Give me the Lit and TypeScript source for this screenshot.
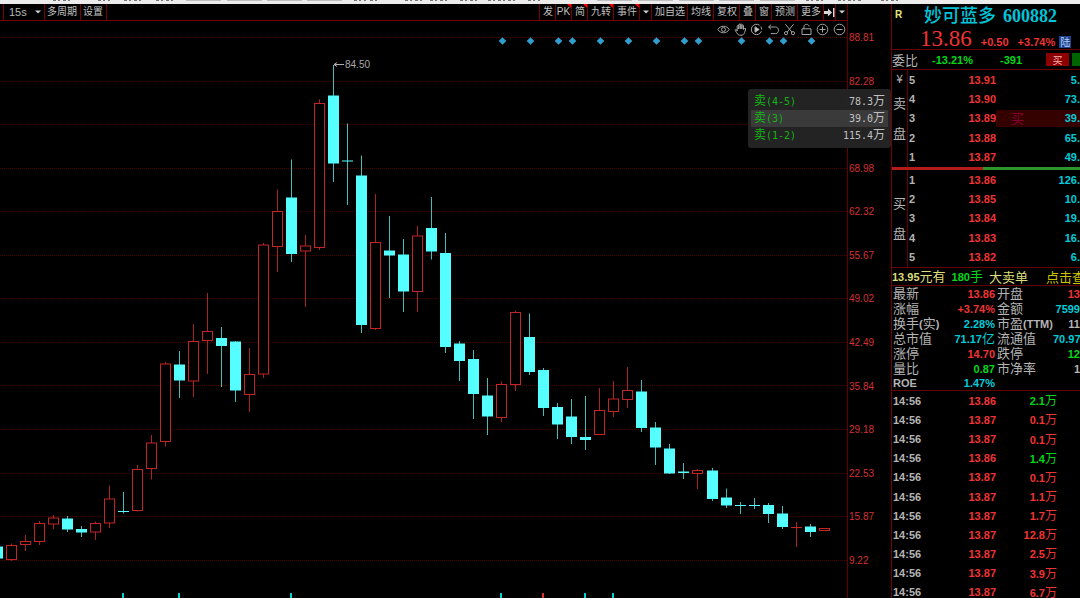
import { LitElement, html, svg, css } from "lit";
import { customElement } from "lit/decorators.js";
import { classMap } from "lit/directives/class-map.js";

// [direction, high, body top, body bottom, low] in canvas pixels
type Candle = ["u" | "d", number, number, number, number];

const CANDLES: Candle[] = [
  ["d", 509.5, 509.5, 521.5, 521.5],
  ["u", 506.5, 508.5, 522.5, 524], ["u", 498, 504.5, 507.5, 514], ["u", 484, 486.5, 504.5, 508],
  ["u", 478, 481, 487, 492], ["d", 479, 481.5, 492.5, 495], ["d", 489, 492, 495.5, 500],
  ["u", 484.5, 486.5, 495, 503], ["u", 448.5, 462, 486, 491], ["d", 455, 474, 475, 476.5],
  ["u", 428, 432.5, 473.5, 474.5], ["u", 398, 406, 431.5, 442.5], ["u", 325, 327, 404.5, 409.5],
  ["d", 314, 327.5, 343.5, 361], ["u", 287, 304.5, 344, 360], ["u", 256, 294.5, 303.5, 337],
  ["d", 290, 301, 309, 350], ["d", 304, 304.5, 353.5, 365], ["u", 311, 337.5, 357.5, 375],
  ["u", 206, 208, 337, 341], ["u", 152.5, 174.5, 209.5, 235], ["d", 122.5, 160.5, 217, 225],
  ["u", 198, 209, 214, 270], ["u", 62.5, 66.5, 210.5, 213], ["d", 28, 58.5, 126.5, 145],
  ["d", 86.5, 123.5, 124.5, 168], ["d", 118.5, 138.5, 288, 296], ["u", 157, 205.5, 291.5, 293],
  ["d", 179, 213.5, 218.5, 261], ["d", 202, 217.5, 254.5, 275], ["u", 189, 199, 254.5, 275],
  ["d", 160, 191, 214.5, 222.5], ["d", 196, 216, 310, 316], ["d", 304, 306.5, 324, 344],
  ["d", 313, 322, 357, 382], ["d", 341, 358.5, 379.5, 398], ["u", 344.5, 347.5, 380.5, 385],
  ["u", 273.5, 275.5, 347.5, 354], ["d", 276.5, 300, 335, 338], ["d", 331, 333, 371, 379],
  ["d", 366, 370, 387.5, 402], ["d", 362, 379.5, 400, 407], ["d", 359, 400, 403, 413],
  ["u", 351, 373.5, 397.5, 398], ["u", 344, 362, 374.5, 380], ["u", 330, 353.5, 362.5, 371],
  ["d", 343, 354.5, 391, 395], ["d", 385, 390.5, 410.5, 428], ["d", 407, 411.5, 436.5, 437],
  ["d", 426, 434.5, 436, 442], ["u", 432, 433.5, 436.5, 452], ["d", 431, 433.5, 462, 464],
  ["d", 451.5, 460.5, 468.5, 471], ["d", 465, 468, 469, 477], ["d", 461, 468, 469, 472],
  ["d", 466, 468, 477, 486], ["d", 469, 476.5, 490, 492], ["u", 485, 490.5, 490.5, 510],
  ["d", 487, 489.5, 495, 500], ["u", 491, 491.5, 493.5, 494],
];

const EVENTS = [36, 38, 40, 41, 43, 45, 47, 49, 50, 53, 55, 56, 58];
const VOLUMES: [number, "u" | "d"][] = [[9, "d"], [13, "d"], [21, "d"], [36, "d"], [39, "u"], [42, "d"], [44, "d"]];
const SCALE = ["88.81", "82.28", "75.63", "68.98", "62.32", "55.67", "49.02", "42.49", "35.84", "29.18", "22.53", "15.87", "9.22"];

const SELLS = [["5", "13.91", "5."], ["4", "13.90", "73."], ["3", "13.89", "39."], ["2", "13.88", "65."], ["1", "13.87", "49."]];
const BUYS = [["1", "13.86", "126."], ["2", "13.85", "10."], ["3", "13.84", "19."], ["4", "13.83", "16."], ["5", "13.82", "6."]];

// label, value, tone, second label, second value, tone
const QUOTE = [
  ["最新", "13.86", "red", "开盘", "13", "red"],
  ["涨幅", "+3.74%", "red", "金额", "7599", "cyan"],
  ["换手(实)", "2.28%", "cyan", "市盈(TTM)", "11", "grey"],
  ["总市值", "71.17亿", "cyan", "流通值", "70.97", "cyan"],
  ["涨停", "14.70", "red", "跌停", "12", "green"],
  ["量比", "0.87", "green", "市净率", "1", "grey"],
  ["ROE", "1.47%", "cyan", "", "", "grey"],
];

const TICKS = [
  ["13.86", "2.1", "green"], ["13.87", "0.1", "red"], ["13.87", "0.1", "red"], ["13.86", "1.4", "green"],
  ["13.87", "0.1", "red"], ["13.87", "1.1", "red"], ["13.87", "1.7", "red"], ["13.87", "12.8", "red"],
  ["13.87", "2.5", "red"], ["13.87", "3.9", "red"], ["13.87", "6.7", "red"],
];

const centre = (i: number) => Math.round(11 + 14.01 * (i - 1));

@customElement("kline-chart")
class KlineChart extends LitElement {
  static styles = css`
    :host { display: block; flex: 1; min-height: 0; }
    .canvas { display: block; width: 100%; height: 100%; overflow: hidden; }
    .grid { stroke: #4c0000; stroke-dasharray: 1 1; }
    .wick-u { stroke: #a82424; }
    .wick-d { stroke: #44bcbc; }
    .body-u { fill: #000; stroke: #c42424; }
    .body-d { fill: #55ffff; }
    .event { fill: #2f9fcf; }
    .vol-u { fill: #e03030; }
    .vol-d { fill: #00d4d4; }
    .note { fill: #a8a8a8; font: 10px "Liberation Sans", sans-serif; }
    .arrow { stroke: #b0b0b0; fill: none; }
  `;

  candle([dir, high, top, bottom, low]: Candle, i: number) {
    const x = centre(i);
    return svg`
      <line class="wick-${dir}" x1=${x + 0.5} x2=${x + 0.5} y1=${high} y2=${low}></line>
      ${dir === "u"
        ? svg`<rect class="body-u" x=${x - 4.5} y=${top} width="10" height=${Math.max(bottom - top, 0.1)}></rect>`
        : svg`<rect class="body-d" x=${x - 5} y=${top} width="11" height=${bottom - top}></rect>`}`;
  }

  render() {
    return html`<svg class="canvas" role="img" aria-label="K线图">
      ${SCALE.map((_, i) => {
        const y = Math.round(i * 43.55) + 0.5;
        return svg`<line class="grid" x1="0" x2="100%" y1=${y} y2=${y}></line>`;
      })}
      ${CANDLES.map((c, i) => this.candle(c, i))}
      ${EVENTS.map((i) => {
        const x = centre(i) + 1.5;
        return svg`<path class="event" d="M${x - 3.8} 4L${x} 0.2L${x + 3.8} 4L${x} 7.8Z"></path>`;
      })}
      ${VOLUMES.map(([i, dir]) => svg`<rect class="vol-${dir}" x=${centre(i) - 1} y="556" width="2" height="5"></rect>`)}
      <path class="arrow" d="M344 27.5H334M337 25.5L334 27.5L337 29.5"></path>
      <text class="note" x="345" y="31">84.50</text>
    </svg>`;
  }
}

@customElement("quote-panel")
class QuotePanel extends LitElement {
  static styles = css`
    :host {
      display: block; box-sizing: border-box; width: 189px; flex: none; overflow: hidden;
      border-left: 1px solid #780000; color: #b4b4b4;
      font: bold 11px/14px "Liberation Sans", "Noto Sans CJK SC", sans-serif; white-space: nowrap;
    }
    .cn { font-size: 13px; font-weight: 400; font-family: "Noto Sans CJK SC", sans-serif; }
    .cn.small { font-size: 12px; }
    .red { color: #f03434; }
    .green { color: #00d818; }
    .cyan { color: #00ccd8; }
    .grey { color: #b4b4b4; }
    .title { display: flex; align-items: center; height: 22px; padding-left: 3px; }
    .mark { width: 29px; color: #e6e67a; font-size: 10px; }
    .name { margin: 0; display: flex; gap: 7px; align-items: baseline; color: #00c4d8; font: 500 18px/22px "Noto Sans CJK SC", sans-serif; }
    .code { font: bold 18px/22px "Liberation Serif", serif; }
    .price { display: flex; align-items: baseline; height: 23px; gap: 9px; padding-left: 28px; border-bottom: 1px solid #600; }
    .last { font: 23px/26px "Liberation Serif", serif; }
    .tag { background: #1d438e; color: #b8d0f4; font: 10px/12px "Noto Sans CJK SC", sans-serif; padding: 0 1px; margin-left: -5px; }
    .ratio { display: flex; align-items: center; height: 19px; border-bottom: 1px solid #600; }
    .ratio .pct { margin-left: 14px; }
    .ratio .diff { margin-left: 27px; }
    .trade { box-sizing: border-box; width: 23px; height: 13px; flex: none; border: 0; padding: 0; font: 10px/13px "Noto Sans CJK SC", sans-serif; }
    .trade.buy { margin-left: 24px; background: #8c0000; color: #f4b0b0; }
    .trade.sell { margin-left: 3px; background: #006400; }
    .book { display: flex; height: 97px; }
    .side { display: flex; flex-direction: column; align-items: center; width: 16px; border-right: 1px solid #600; gap: 16px; padding-top: 26px; box-sizing: border-box; height: 97px; flex: none; }
    .side.sells { padding-top: 1px; }
    .side.sells .yen { margin-bottom: -5px; font-size: 12px; }
    table { border-collapse: collapse; table-layout: fixed; width: 100%; }
    td, th { padding: 0; height: 1px; font-weight: bold; text-align: right; vertical-align: middle; overflow: hidden; }
    th { text-align: left; }
    .levels { height: 97px; }
    .levels th { padding-left: 1px; }
    .c-level { width: 40px; }
    .c-price { width: 48px; }
    .vol { display: flex; justify-content: flex-end; align-items: center; height: 17px; }
    .vol.hot { background: #340000; justify-content: space-between; padding-left: 15px; }
    .hint { color: #86002c; }
    .balance { display: flex; height: 3px; }
    .balance .sold { width: 91px; background: #b41c1c; }
    .balance .bought { flex: 1; background: #2c962c; }
    .alert { display: flex; height: 17px; align-items: center; border: solid #600; border-width: 1px 0; color: #dcdc78; }
    .alert .qty { margin: 0 6px; }
    .alert a { margin-left: 18px; color: #d0c400; text-decoration: none; }
    .quote { height: 104px; line-height: 14px; }
    .quote th { padding-left: 1px; overflow: visible; }
    .quote .c1 { width: 50px; }
    .quote .c2 { width: 53px; }
    .quote .c3 { width: 58px; }
    .quote .second { padding-left: 2px; }
    .ticks { height: 212px; border-top: 1px solid #600; }
    .ticks th { padding-left: 1px; }
    .ticks .c1 { width: 56px; }
    .ticks .c2 { width: 48px; }
    .ticks .c3 { width: 61px; }
  `;

  // numerals stay bold, characters use the regular CJK face
  mixed(text: string, small = false) {
    return text.split(/([\u4e00-\u9fff]+)/).map((part) =>
      /[\u4e00-\u9fff]/.test(part) ? html`<span class=${classMap({ cn: true, small })}>${part}</span>` : part);
  }

  levels(rows: string[][], label: string, hot = "") {
    return html`<table class="levels" aria-label=${label}>
      <colgroup><col class="c-level"><col class="c-price"><col></colgroup>
      ${rows.map(([n, price, vol]) => html`<tr>
        <th scope="row">${n}</th><td class="red">${price}</td>
        <td class="cyan"><div class=${classMap({ vol: true, hot: n === hot })}>
          ${n === hot ? html`<span class="cn hint">买</span>` : ""}<span>${vol}</span></div></td>
      </tr>`)}
    </table>`;
  }

  render() {
    return html`
      <div class="title"><span class="mark">R</span><h1 class="name">妙可蓝多<span class="code">600882</span></h1></div>
      <div class="price red"><span class="last">13.86</span><span>+0.50</span><span>+3.74%</span><span class="tag">陆</span></div>
      <div class="ratio"><span class="cn">委比</span><span class="pct green">-13.21%</span><span class="diff green">-391</span>
        <button class="trade buy">买</button><button class="trade sell" aria-label="卖出"></button></div>
      <div class="book">
        <div class="side sells cn"><span class="yen">¥</span><span>卖</span><span>盘</span></div>
        ${this.levels(SELLS, "卖盘", "3")}
      </div>
      <div class="balance"><div class="sold"></div><div class="bought"></div></div>
      <div class="book">
        <div class="side cn"><span>买</span><span>盘</span></div>
        ${this.levels(BUYS, "买盘")}
      </div>
      <div class="alert"><span>${this.mixed("13.95元有")}</span><span class="qty green">${this.mixed("180手")}</span><span class="cn">大卖单</span><a class="cn" href="#orders">点击查</a></div>
      <table class="quote">
        <colgroup><col class="c1"><col class="c2"><col class="c3"><col></colgroup>
        ${QUOTE.map(([a, b, tone, c, d, tone2]) => html`<tr>
          <th scope="row">${this.mixed(a)}</th><td class=${tone}>${this.mixed(b)}</td>
          <th scope="row" class="second">${this.mixed(c)}</th><td class=${tone2}>${d}</td></tr>`)}
      </table>
      <table class="ticks">
        <colgroup><col class="c1"><col class="c2"><col class="c3"><col></colgroup>
        ${TICKS.map(([price, vol, tone]) => html`<tr>
          <th scope="row">14:56</th><td class="red">${price}</td><td class=${tone}>${this.mixed(vol + "万", true)}</td><td></td></tr>`)}
      </table>`;
  }
}

const ICONS: [string, unknown][] = [
  ["显示", svg`<path d="M0.8 6.5C3.2 2.2 9.8 2.2 12.2 6.5C9.8 10.8 3.2 10.8 0.8 6.5Z"/><circle cx="6.5" cy="6.5" r="2"/>`],
  ["拖动", svg`<path d="M3.2 8V3.2C3.2 2.2 4.7 2.2 4.7 3.2V6V1.8C4.7 0.8 6.3 0.8 6.3 1.8V5.8V1.6C6.3 0.6 7.9 0.6 7.9 1.6V6V2.6C7.9 1.6 9.5 1.6 9.5 2.6V6.5C9.8 5.4 11.9 4.8 11.7 6L10.6 9.6C9.9 11.6 8.8 12.3 7 12.3C4.6 12.3 3.4 11.3 2.6 9.6L1.2 7.4C0.8 6.4 2 5.8 2.6 6.8Z"/>`],
  ["回放", svg`<path d="M9.6 2.3A5.2 5.2 0 1 0 11.4 8.2M11.7 6.5A5.2 5.2 0 0 0 10.8 3.6"/><path class="solid" d="M5 3.8L9.2 6.5L5 9.2Z"/>`],
  ["撤销", svg`<path d="M4.2 1.5L1.6 4L4.2 6.5M1.6 4H8.6C12.4 4 12.4 10.6 8.6 10.6H3.8"/>`],
  ["剪切", svg`<path d="M2.4 1.2L8.8 9M10.6 1.2L4.2 9"/><circle cx="3" cy="10.2" r="1.6"/><circle cx="10" cy="10.2" r="1.6"/>`],
  ["锁定", svg`<path d="M2 5.8H11V11.5H2ZM4 5.8V3.4C4 0.6 9 0.6 9 3.4"/>`],
  ["放大", svg`<circle cx="6.5" cy="6.5" r="5.3"/><path d="M3.5 6.5H9.5M6.5 3.5V9.5"/>`],
  ["缩小", svg`<circle cx="6.5" cy="6.5" r="5.3"/><path d="M3.5 6.5H9.5"/>`],
];

@customElement("app-root")
class AppRoot extends LitElement {
  static styles = css`
    :host { display: flex; flex-direction: column; height: 100vh; overflow: hidden; background: #000; color: #b0b0b0; font: 10px/14px "Liberation Sans", "Noto Sans CJK SC", sans-serif; }
    .strip { display: block; flex: none; width: 100%; height: 4px; background: #ececec; }
    .strip .ink { stroke: #777; stroke-dasharray: 3 2 2 3; stroke-width: 2; }
    .strip .box { stroke: #bdbdbd; stroke-width: 2; }
    .main { display: flex; flex: 1; min-height: 0; position: relative; }
    .plot { flex: 1; min-width: 0; display: flex; flex-direction: column; border-right: 1px solid #600; }
    .bar { display: flex; justify-content: space-between; height: 16px; border-bottom: 1px solid #780000; }
    .group { display: flex; }
    .group.left { padding-left: 3px; }
    .tool { position: relative; box-sizing: border-box; height: 16px; margin: 0; padding: 0 2px 0 3px; border: 0; border-left: 1px solid #780000; border-radius: 0; background: none; color: #c0c0c0; font: 10px/16px "Liberation Sans", "Noto Sans CJK SC", sans-serif; white-space: nowrap; }
    .group.left .tool { padding: 0 3px 0 2px; }
    .group.left .tool:last-child { border-right: 1px solid #780000; }
    .tool.latin { width: 16px; padding: 0; }
    .tool.icon { width: 12px; padding: 0; display: grid; place-items: center; }
    .tool.flag::after { content: ""; position: absolute; top: 0; right: 0; border: 2px solid; border-color: #f00 #f00 transparent transparent; }
    .period { position: relative; display: flex; align-items: center; width: 41px; border-left: 1px solid #780000; box-sizing: border-box; }
    .period select { appearance: none; width: 100%; height: 16px; border: 0; padding: 0 0 0 5px; background: none; color: #b8b8b8; font: 11px/16px "Liberation Sans", sans-serif; }
    .period svg { position: absolute; right: 3px; pointer-events: none; }
    .caret { fill: #d0d0d0; display: block; }
    .jump { display: block; fill: #d8d8d8; }
    .actions { display: flex; justify-content: space-between; align-self: flex-end; width: 129px; height: 16px; margin-right: 1px; align-items: center; }
    .act { width: 13px; height: 13px; padding: 0; border: 0; background: none; }
    .act svg { display: block; fill: none; stroke: #a4a4a4; stroke-width: 1; }
    .act .solid { fill: #d0d0d0; }
    .axis { width: 43px; flex: none; box-sizing: border-box; padding: 27px 0 0 1px; color: #d43030; }
    .scale { margin: 0; padding: 0; list-style: none; display: flex; flex-direction: column; justify-content: space-between; height: 537px; }
    .popup { position: absolute; right: 189px; top: 85px; width: 143px; box-sizing: border-box; padding: 4px 3px; border-radius: 3px; background: rgba(36, 36, 36, 0.96); font: 10px/17px "DejaVu Sans Mono", monospace; }
    .popup table { width: 100%; border-collapse: collapse; }
    .popup th { padding: 0 0 0 3px; text-align: left; font-weight: normal; color: #16b416; }
    .popup td { padding: 0 3px 0 0; text-align: right; color: #c0c0c0; }
    .popup .hot { background: #3a3a3a; }
    .cn { font: 12px/12px "Noto Sans CJK SC", sans-serif; }
  `;

  caret() {
    return html`<svg class="caret" width="6" height="4"><path d="M0 0.5H6L3 3.5Z"></path></svg>`;
  }

  tool(label: string, flag = false) {
    return html`<button class=${classMap({ tool: true, flag, latin: label === "PK" })}>${label}</button>`;
  }

  render() {
    const ink = [[53, 73], [98, 110], [124, 142], [156, 175], [354, 366], [370, 380], [405, 425], [430, 450], [460, 478], [488, 515], [528, 540], [806, 826], [838, 862], [881, 900]];
    const boxes = [186, 227, 267, 307, 597, 638, 679, 719, 760];
    const popup = [["(4-5)", "78.3"], ["(3)", "39.0"], ["(1-2)", "115.4"]];
    return html`
      <svg class="strip" aria-hidden="true">
        ${ink.map(([a, b]) => svg`<line class="ink" x1=${a} x2=${b} y1="0" y2="0"></line>`)}
        ${boxes.map((a) => svg`<line class="box" x1=${a} x2=${a + 35} y1="0" y2="0"></line>`)}
      </svg>
      <div class="main">
        <div class="plot">
          <div class="bar">
            <div class="group left">
              <label class="period"><select aria-label="周期"><option>15s</option></select>${this.caret()}</label>
              ${this.tool("多周期")}${this.tool("设置")}
            </div>
            <div class="group">
              ${this.tool("发")}${this.tool("PK", true)}${this.tool("简", true)}${this.tool("九转", true)}${this.tool("事件", true)}
              <button class="tool icon" aria-label="事件选项">${this.caret()}</button>
              ${["加自选", "均线", "复权", "叠", "窗", "预测", "更多"].map((t) => this.tool(t))}
              <button class="tool icon" aria-label="隐藏侧栏"><svg class="jump" width="11" height="9"><path d="M0 3H4V0.5L8 4.5L4 8.5V6H0ZM9 0H10.5V9H9Z"></path></svg></button>
              <button class="tool icon" aria-label="更多选项">${this.caret()}</button>
            </div>
          </div>
          <div class="actions">
            ${ICONS.map(([name, shape]) => html`<button class="act" aria-label=${name}><svg width="13" height="13" viewBox="0 0 13 13">${shape}</svg></button>`)}
          </div>
          <kline-chart></kline-chart>
        </div>
        <div class="axis"><ul class="scale">${SCALE.map((v) => html`<li>${v}</li>`)}</ul></div>
        <quote-panel></quote-panel>
        <div class="popup"><table>
          ${popup.map(([level, amount], i) => html`<tr class=${classMap({ hot: i === 1 })}>
            <th scope="row"><span class="cn">卖</span>${level}</th><td>${amount}<span class="cn">万</span></td></tr>`)}
        </table></div>
      </div>`;
  }
}
